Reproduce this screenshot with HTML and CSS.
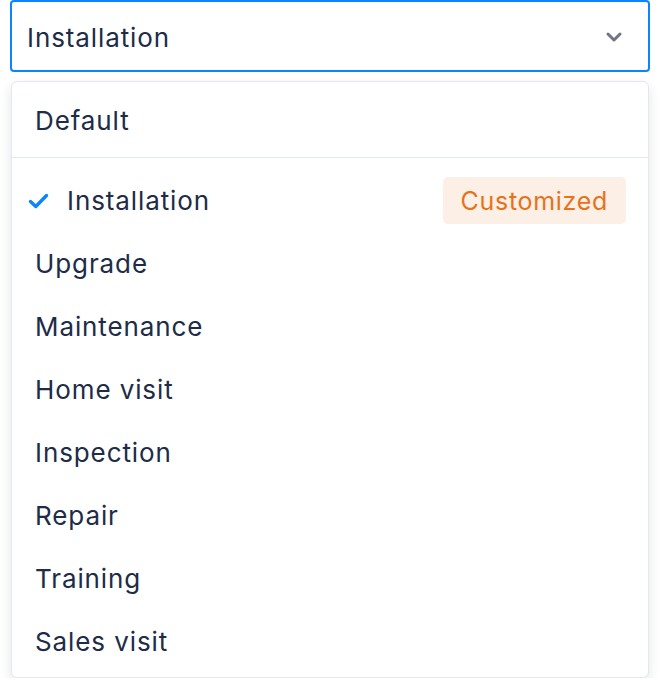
FILE: index.html
```html
<!DOCTYPE html>
<html lang="en">
<head>
<meta charset="utf-8">
<link rel="stylesheet" href="styles.css">
</head>
<body>
<div class="page">
  <div class="select">
    <span class="select-value">Installation</span>
    <svg class="chevron" width="16" height="10" viewBox="0 0 16 10"><path d="M2 2 L8 8 L14 2" fill="none" stroke="#6f7587" stroke-width="3" stroke-linecap="round" stroke-linejoin="round"/></svg>
  </div>
  <div class="menu">
    <div class="menu-default">Default</div>
    <ul class="menu-list">
      <li class="item selected">
        <svg class="check" width="21" height="16" viewBox="0 0 21 16"><path d="M2.5 8.5 L7.8 13.5 L18.5 2.5" fill="none" stroke="#0a84ff" stroke-width="3.4" stroke-linecap="round" stroke-linejoin="round"/></svg>
        <span class="label">Installation</span>
        <span class="badge">Customized</span>
      </li>
      <li class="item">Upgrade</li>
      <li class="item">Maintenance</li>
      <li class="item">Home visit</li>
      <li class="item">Inspection</li>
      <li class="item">Repair</li>
      <li class="item">Training</li>
      <li class="item">Sales visit</li>
    </ul>
  </div>
</div>
</body>
</html>
```

FILE: styles.css
```css
* { box-sizing: border-box; }
html, body { margin: 0; padding: 0; background: #ffffff; }
body {
  font-family: Inter, "Noto Sans", sans-serif;
  color: #202c47;
  font-size: 26px;
  letter-spacing: 0.9px;
}
.page { padding: 0 10px; }
.select {
  height: 72px;
  border: 2px solid #0a84ff;
  border-radius: 4px;
  display: flex;
  align-items: center;
  justify-content: space-between;
  padding: 2px 26px 0 15px;
}
.chevron { display: block; }
.menu {
  margin: 9px 1px 0 1px;
  border: 1px solid #e3e7ee;
  border-radius: 6px;
  box-shadow: 0 5px 12px rgba(30, 41, 70, 0.12);
  background: #fff;
}
.menu-default {
  height: 76px;
  display: flex;
  align-items: center;
  padding: 2px 0 0 23px;
  border-bottom: 1px solid #e3e7ee;
}
.menu-list {
  list-style: none;
  margin: 0;
  padding: 10px 0 5px 0;
}
.item {
  height: 63px;
  display: flex;
  align-items: center;
  padding: 2px 22px 0 23px;
}
.item.selected { padding-left: 16px; }
.check { display: block; margin-right: 18px; }
.label { flex: 1; }
.badge {
  background: #fcefe5;
  color: #e8711a;
  border-radius: 5px;
  height: 47px;
  display: flex;
  align-items: center;
  padding: 0 18px;
  font-size: 25px;
  letter-spacing: 0.7px;
}
```
